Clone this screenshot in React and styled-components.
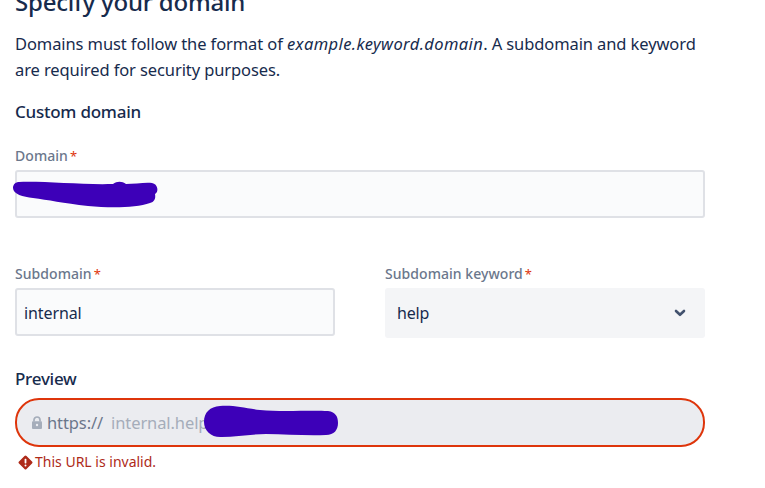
import React from 'react';
import styled, { createGlobalStyle } from 'styled-components';

const GlobalStyle = createGlobalStyle`
  html, body {
    margin: 0;
    padding: 0;
    background: #fff;
    overflow: hidden;
    height: 488px;
  }
  body {
    font-family: "Noto Sans", "Open Sans", sans-serif;
    color: #172b4d;
  }
`;

const Page = styled.div`
  width: 690px;
  padding: 0 0 0 15px;
`;

const Title = styled.h1`
  margin: -12px 0 0;
  font-size: 24px;
  line-height: 28px;
  font-weight: 500;
  letter-spacing: -0.2px;
  color: #172b4d;
`;

const Intro = styled.p`
  margin: 15px 0 0;
  font-size: 16.5px;
  line-height: 26px;
  letter-spacing: -0.1px;
  color: #172b4d;

  em {
    letter-spacing: 0.4px;
  }
`;

const SectionTitle = styled.h2`
  margin: 17px 0 0;
  font-size: 17px;
  line-height: 24px;
  font-weight: 500;
  letter-spacing: -0.25px;
  color: #172b4d;
`;

const Field = styled.div`
  position: relative;
  margin-top: ${(p) => p.$top || 0}px;
`;

const Label = styled.label`
  display: block;
  height: 20px;
  margin-bottom: 4px;
  font-size: 14px;
  line-height: 20px;
  font-weight: 500;
  letter-spacing: 0.05px;
  color: #6b778c;
`;

const Required = styled.span`
  margin-left: 2px;
  font-size: 13px;
  font-weight: 400;
  color: #de350b;
`;

const TextInput = styled.div`
  box-sizing: border-box;
  height: 48px;
  padding: 2px 7px 0;
  display: flex;
  align-items: center;
  background: #fafbfc;
  border: 2px solid #dfe1e6;
  border-radius: 3px;
  font-size: 16px;
  letter-spacing: -0.1px;
  color: #172b4d;
`;

const Row = styled.div`
  display: grid;
  grid-template-columns: 320px 320px;
  column-gap: 50px;
  margin-top: 46px;
`;

const Select = styled.div`
  box-sizing: border-box;
  height: 50px;
  padding: 0 19px 0 12px;
  display: flex;
  align-items: center;
  justify-content: space-between;
  background: #f4f5f7;
  border-radius: 3px;
  font-size: 16px;
  letter-spacing: -0.2px;
  color: #172b4d;
`;

const PreviewLabel = styled.div`
  margin-top: 29px;
  font-size: 17px;
  line-height: 24px;
  font-weight: 500;
  letter-spacing: -0.25px;
  color: #172b4d;
`;

const PreviewBox = styled.div`
  position: relative;
  box-sizing: border-box;
  height: 49px;
  margin-top: 7px;
  padding: 0 14px;
  display: flex;
  align-items: center;
  background: #ebecf0;
  border: 2px solid #de350b;
  border-radius: 24px;
  font-size: 16.5px;
  letter-spacing: -0.1px;
`;

const Protocol = styled.span`
  margin-left: 4px;
  color: #6b778c;
`;

const Host = styled.span`
  margin-left: 8px;
  color: #a5adba;
`;

const ErrorLine = styled.div`
  margin-top: 5px;
  padding-left: 3px;
  display: flex;
  align-items: center;
  gap: 2px;
  font-size: 14px;
  line-height: 20px;
  letter-spacing: 0;
  color: #ae2a19;
`;

const Scribble = styled.svg`
  position: absolute;
  left: ${(p) => p.$left}px;
  top: ${(p) => p.$top}px;
  overflow: visible;
`;

const LockIcon = () => (
  <svg width="12" height="14" viewBox="0 0 12 14" fill="#a5adba">
    <path d="M1 6.2c0-.5.4-.9.9-.9h8.2c.5 0 .9.4.9.9v5.900c0 .5-.4.9-.9.9H1.900c-.5 0-.9-.4-.9-.9z" />
    <path d="M3 5.500V4a3 3 0 0 1 6 0v1.500" fill="none" stroke="#a5adba" strokeWidth="1.700" />
    <circle cx="6" cy="9" r="1.200" fill="#ebecf0" />
  </svg>
);

const ChevronIcon = () => (
  <svg width="12" height="8" viewBox="0 0 12 8" fill="none">
    <path d="M2 2l4 3.800L10 2" stroke="#42526e" strokeWidth="2.600" strokeLinecap="round" strokeLinejoin="round" />
  </svg>
);

const ErrorIcon = () => (
  <svg width="15" height="15" viewBox="0 0 15 15">
    <path d="M6.500 1L1 6.500a1.400 1.400 0 0 0 0 2L6.500 14a1.400 1.400 0 0 0 2 0L14 8.500a1.400 1.400 0 0 0 0-2L8.500 1a1.400 1.400 0 0 0-2 0z" fill="#ae2a19" />
    <rect x="6.600" y="3.800" width="1.800" height="4.600" rx=".6" fill="#fff" />
    <circle cx="7.500" cy="10.400" r="1" fill="#fff" />
  </svg>
);

export default function App() {
  return (
    <Page>
      <GlobalStyle />
      <Title>Specify your domain</Title>
      <Intro>
        Domains must follow the format of <em>example.keyword.domain</em>. A subdomain and keyword
        <br />
        are required for security purposes.
      </Intro>
      <SectionTitle>Custom domain</SectionTitle>

      <Field $top={22}>
        <Label>Domain<Required>*</Required></Label>
        <TextInput />
        <Scribble $left={-2} $top={33} width="146" height="31" viewBox="0 0 146 31">
          <path
            d="M6 3C30 2 70 6 100 5c4-3 9-3 13 0 8 0 20-2 26-1 6 1 7 9 3 11 1 5-1 8-5 9-14 5-40 5-62 3C50 24 35 21 20 19 10 18 0 15 0 9 0 5 3 3 6 3z"
            fill="#3d00b8"
          />
        </Scribble>
      </Field>

      <Row>
        <Field>
          <Label>Subdomain<Required>*</Required></Label>
          <TextInput>internal</TextInput>
        </Field>
        <Field>
          <Label>Subdomain keyword<Required>*</Required></Label>
          <Select>
            help
            <ChevronIcon />
          </Select>
        </Field>
      </Row>

      <PreviewLabel>Preview</PreviewLabel>
      <PreviewBox>
        <LockIcon />
        <Protocol>https://</Protocol>
        <Host>internal.help</Host>
        <Scribble $left={187} $top={5} width="135" height="36" viewBox="0 0 135 36">
          <path
            d="M16 1c14-1 24 2 40 4 22 2 50 0 68 1 8 1 10 6 10 12 0 7-4 12-12 12-20 1-40-1-60-1-14 0-30 3-44 3C8 33 0 26 0 17 0 7 6 2 16 1z"
            fill="#3d00b8"
          />
        </Scribble>
      </PreviewBox>
      <ErrorLine>
        <ErrorIcon />
        This URL is invalid.
      </ErrorLine>
    </Page>
  );
}
